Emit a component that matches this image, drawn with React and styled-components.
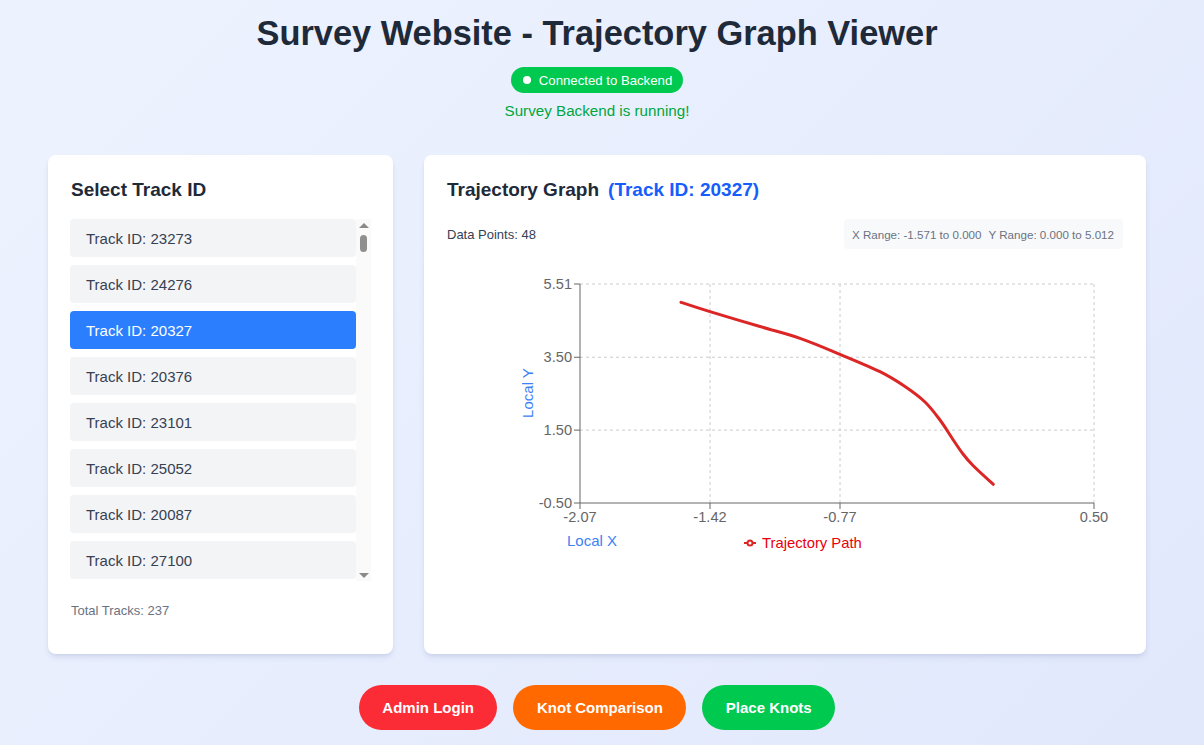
import React, { useState } from "react";
import styled, { createGlobalStyle } from "styled-components";

const GlobalStyle = createGlobalStyle`
  html, body { margin: 0; padding: 0; }
  body {
    font-family: "Liberation Sans", Arial, sans-serif;
    background: linear-gradient(135deg, #edf3fe 0%, #e1e8fc 100%);
    min-height: 745px;
    overflow: hidden;
  }
`;

const Page = styled.div`
  width: 1098px;
  margin-left: 48px;
  padding-top: 14px;
  display: flex;
  flex-direction: column;
  align-items: center;
`;

const Title = styled.h1`
  margin: 0;
  font-size: 34.4px;
  line-height: 39px;
  font-weight: 700;
  color: #1e2939;
`;

const Badge = styled.div`
  margin-top: 14px;
  height: 26px;
  box-sizing: border-box;
  padding: 0 11px 0 12px;
  display: inline-flex;
  align-items: center;
  gap: 8px;
  border-radius: 13px;
  background: #00c950;
  color: #fff;
  font-size: 13.2px;
`;

const Dot = styled.span`
  width: 8px;
  height: 8px;
  border-radius: 50%;
  background: #fff;
`;

const Status = styled.p`
  margin: 9px 0 0;
  font-size: 15.2px;
  line-height: 17px;
  color: #00a63e;
`;

const Grid = styled.div`
  margin-top: 36px;
  width: 100%;
  display: grid;
  grid-template-columns: 345px 722px;
  gap: 31px;
`;

const Card = styled.section`
  background: #fff;
  border-radius: 8px;
  box-shadow: 0 4px 6px -1px rgba(30, 50, 120, 0.1), 0 2px 4px -2px rgba(30, 50, 120, 0.1);
  height: 499px;
  box-sizing: border-box;
  padding: 24px ${(p) => p.$side}px 23px;
`;

const CardTitle = styled.h2`
  margin: 0;
  padding-left: ${(p) => p.$indent || 0}px;
  font-size: 19px;
  line-height: 22px;
  font-weight: 700;
  color: #1e2939;
  display: flex;
  gap: 9px;
`;

const Accent = styled.span`
  color: #155dfc;
`;

const ListFrame = styled.div`
  margin-top: 18px;
  height: 362px;
  display: flex;
`;

const List = styled.div`
  flex: 1;
  overflow: hidden;
  display: flex;
  flex-direction: column;
  gap: 8px;
`;

const Rail = styled.div`
  width: 15px;
  flex: 0 0 15px;
  background: #fafafa;
  display: flex;
  flex-direction: column;
  align-items: center;
`;

const Arrow = styled.span`
  width: 0;
  height: 0;
  border-left: 5px solid transparent;
  border-right: 5px solid transparent;
  ${(p) =>
    p.$down
      ? "border-top: 5px solid #8a8a8a; margin-top: auto; margin-bottom: 3px;"
      : "border-bottom: 5px solid #8a8a8a; margin-top: 4px;"}
`;

const Thumb = styled.span`
  margin-top: 7px;
  width: 7px;
  height: 17px;
  border-radius: 4px;
  background: #8f8f8f;
`;

const Item = styled.button`
  flex: 0 0 38px;
  height: 38px;
  border: none;
  border-radius: 4px;
  padding: 0 16px;
  text-align: left;
  font-family: inherit;
  font-size: 15px;
  cursor: pointer;
  background: ${(p) => (p.$active ? "#2b7fff" : "#f3f4f6")};
  color: ${(p) => (p.$active ? "#ffffff" : "#364153")};
`;

const Footnote = styled.p`
  margin: 22px 0 0 1px;
  font-size: 13px;
  line-height: 15px;
  color: #6a7282;
`;

const InfoRow = styled.div`
  margin-top: 18px;
  display: flex;
  align-items: center;
  justify-content: space-between;
  height: 30px;
`;

const InfoText = styled.span`
  font-size: 13px;
  color: #364153;
`;

const RangeBox = styled.div`
  height: 30px;
  box-sizing: border-box;
  padding: 0 9px 0 8px;
  display: flex;
  align-items: center;
  gap: 7px;
  background: #f8f9fb;
  border-radius: 4px;
  font-size: 11.6px;
  color: #6a7282;
`;

const ChartSvg = styled.svg`
  display: block;
  margin-top: 13px;
  font-family: "Liberation Sans", Arial, sans-serif;
`;

const TickText = styled.text`
  font-size: 14.6px;
  fill: #666;
`;

const AxisLabel = styled.text`
  font-size: 15px;
  fill: #3b82f6;
`;

const LegendText = styled.text`
  font-size: 14.8px;
  fill: #e7000b;
`;

const ButtonRow = styled.div`
  margin-top: 31px;
  display: flex;
  gap: 16px;
`;

const ActionButton = styled.button`
  height: 45px;
  padding: 0 23.5px;
  border: none;
  border-radius: 23px;
  background: ${(p) => p.$bg};
  color: #fff;
  font-family: inherit;
  font-size: 15px;
  font-weight: 700;
  cursor: pointer;
`;

const known = [23273, 24276, 20327, 20376, 23101, 25052, 20087, 27100];
const ids = (() => {
  const out = [...known];
  let s = 12345;
  while (out.length < 237) {
    s = (s * 1103515245 + 12345) % 2147483648;
    const v = 20000 + (s % 8000);
    if (!out.includes(v)) out.push(v);
  }
  return out;
})();
const VISIBLE = 8;

// plot geometry (svg coords)
const X0 = 133, X1 = 647, Y0 = 22, Y1 = 241;
const px = (x) => X0 + (x + 2.07) * 200;
const py = (y) => Y0 + (5.51 - y) * 36.44;

const pagePts = [
  [681, 302.3], [710, 311.6], [760, 326.5], [800, 338.3], [840, 354.3],
  [880, 371.7], [905, 386.5], [925, 402], [940, 420], [952, 438],
  [963, 454], [973, 465.5], [993.3, 484.3],
];
const pts = pagePts.map(([x, y]) => [x - 447, y - 262]);

function smoothPath(p) {
  let d = `M${p[0][0]},${p[0][1]}`;
  for (let i = 0; i < p.length - 1; i++) {
    const p0 = p[i - 1] || p[i];
    const p1 = p[i];
    const p2 = p[i + 1];
    const p3 = p[i + 2] || p2;
    const c1 = [p1[0] + (p2[0] - p0[0]) / 6, p1[1] + (p2[1] - p0[1]) / 6];
    const c2 = [p2[0] - (p3[0] - p1[0]) / 6, p2[1] - (p3[1] - p1[1]) / 6];
    d += ` C${c1[0].toFixed(1)},${c1[1].toFixed(1)} ${c2[0].toFixed(1)},${c2[1].toFixed(1)} ${p2[0]},${p2[1]}`;
  }
  return d;
}

const xTicks = [[-2.07, "-2.07"], [-1.42, "-1.42"], [-0.77, "-0.77"], [0.5, "0.50"]];
const yTicks = [[5.51, "5.51"], [3.5, "3.50"], [1.5, "1.50"], [-0.5, "-0.50"]];

function Chart() {
  return (
    <ChartSvg width="676" height="300" viewBox="0 0 676 300">
      <g stroke="#ccc" strokeDasharray="3 3" fill="none">
        {yTicks.slice(0, 3).map(([v]) => (
          <line key={v} x1={X0} x2={X1} y1={py(v)} y2={py(v)} />
        ))}
        {xTicks.slice(1).map(([v]) => (
          <line key={v} x1={px(v)} x2={px(v)} y1={Y0} y2={Y1} />
        ))}
      </g>
      <g stroke="#666" fill="none">
        <line x1={X0} x2={X0} y1={Y0} y2={Y1} />
        <line x1={X0} x2={X1} y1={Y1} y2={Y1} />
        {yTicks.map(([v]) => (
          <line key={v} x1={X0 - 6} x2={X0} y1={py(v)} y2={py(v)} />
        ))}
        {xTicks.map(([v]) => (
          <line key={v} x1={px(v)} x2={px(v)} y1={Y1} y2={Y1 + 6} />
        ))}
      </g>
      {yTicks.map(([v, t]) => (
        <TickText key={t} x={X0 - 8} y={py(v)} dy="0.355em" textAnchor="end">
          {t}
        </TickText>
      ))}
      {xTicks.map(([v, t]) => (
        <TickText key={t} x={px(v)} y={Y1 + 14} dy="0.355em" textAnchor="middle">
          {t}
        </TickText>
      ))}
      <AxisLabel x="81" y="131" textAnchor="middle" dy="0.355em" transform="rotate(-90 81 131)">
        Local Y
      </AxisLabel>
      <AxisLabel x="145" y="279" textAnchor="middle" dy="0.355em">
        Local X
      </AxisLabel>
      <path d={smoothPath(pts)} fill="none" stroke="#dc2626" strokeWidth="3" strokeLinecap="round" strokeLinejoin="round" />
      <g stroke="#dc2626" strokeWidth="2" fill="#fff">
        <line x1="297" x2="309" y1="281" y2="281" />
        <circle cx="303" cy="281" r="2.5" />
      </g>
      <LegendText x="315" y="281" dy="0.355em">Trajectory Path</LegendText>
    </ChartSvg>
  );
}

export default function App() {
  const [selected, setSelected] = useState(20327);
  const [offset] = useState(0);
  const visible = ids.slice(offset, offset + VISIBLE);
  return (
    <>
      <GlobalStyle />
      <Page>
        <Title>Survey Website - Trajectory Graph Viewer</Title>
        <Badge>
          <Dot />
          Connected to Backend
        </Badge>
        <Status>Survey Backend is running!</Status>
        <Grid>
          <Card $side={22}>
            <CardTitle $indent={1}>Select Track ID</CardTitle>
            <ListFrame>
              <List>
                {visible.map((id) => (
                  <Item key={id} $active={id === selected} onClick={() => setSelected(id)}>
                    Track ID: {id}
                  </Item>
                ))}
              </List>
              <Rail aria-hidden="true">
                <Arrow />
                <Thumb />
                <Arrow $down />
              </Rail>
            </ListFrame>
            <Footnote>Total Tracks: {ids.length}</Footnote>
          </Card>
          <Card $side={23}>
            <CardTitle>
              Trajectory Graph <Accent>(Track ID: {selected})</Accent>
            </CardTitle>
            <InfoRow>
              <InfoText>Data Points: 48</InfoText>
              <RangeBox>
                <span>X Range: -1.571 to 0.000</span>
                <span>Y Range: 0.000 to 5.012</span>
              </RangeBox>
            </InfoRow>
            <Chart />
          </Card>
        </Grid>
        <ButtonRow>
          <ActionButton $bg="#fb2c36">Admin Login</ActionButton>
          <ActionButton $bg="#ff6900">Knot Comparison</ActionButton>
          <ActionButton $bg="#00c950">Place Knots</ActionButton>
        </ButtonRow>
      </Page>
    </>
  );
}
